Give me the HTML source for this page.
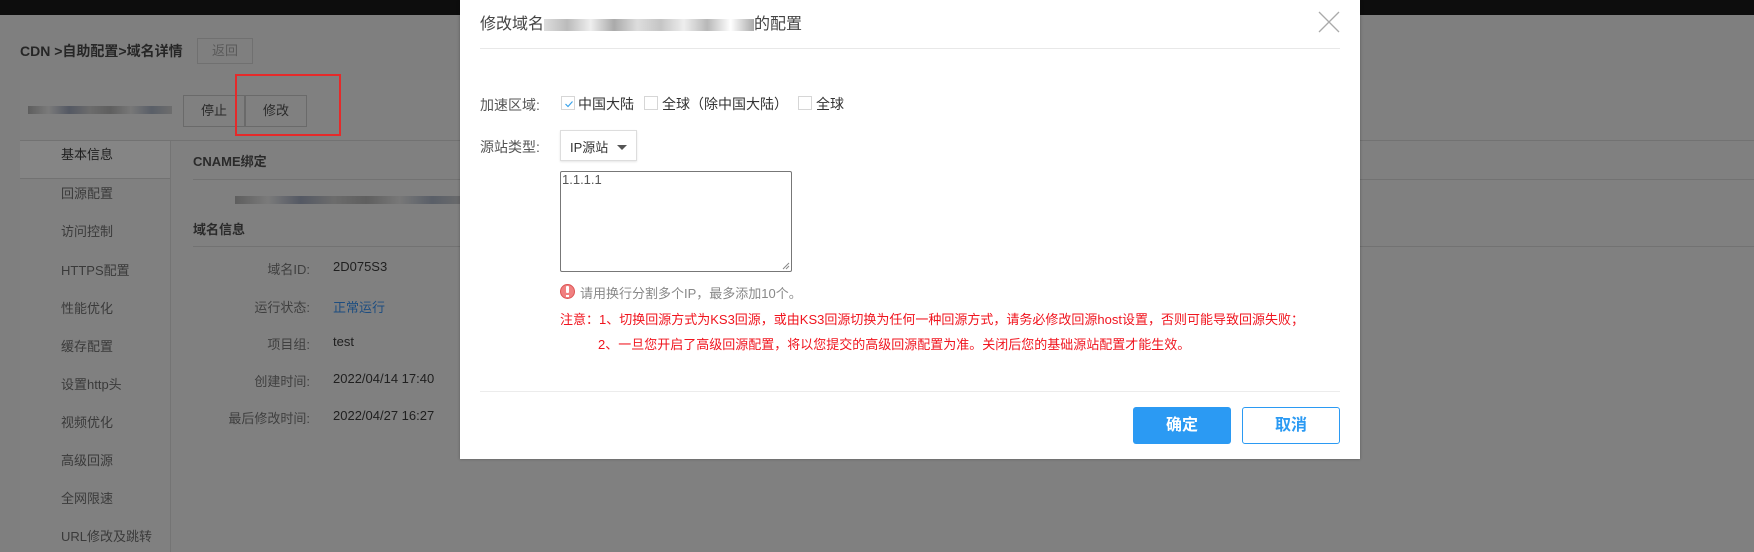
<!DOCTYPE html>
<html><head><meta charset="utf-8"><style>
*{margin:0;padding:0;box-sizing:border-box}
body{width:1754px;height:552px;overflow:hidden;background:#7f7f7f;font-family:"Liberation Sans","Noto Sans CJK SC",sans-serif;position:relative;color:#2a2a2a}
.a{position:absolute;white-space:nowrap}
.top{left:0;top:0;width:1754px;height:15px;background:#0d0d0d}
.panel{left:20px;top:80px;width:1734px;height:472px;background:#808080}
.hl{position:absolute;height:1px;background:#727272}
.nav{font-size:13px;color:#3a3a3a;left:61px}
.lab{font-size:13px;color:#3f3f3f;text-align:right;width:140px;left:170px}
.val{font-size:13px;color:#1f1f1f;left:333px}
.btn{border:1px solid #6a6a6a;font-size:13px;color:#2a2a2a;text-align:center}
.blur{background:linear-gradient(90deg,#5a5a5a,#7a7a7a,#4f5460,#6a6a6a,#5b5b5b,#777,#555b65,#6b6b6b);height:8px;opacity:.9}
.modal{left:460px;top:0;width:900px;height:459px;background:#fff;box-shadow:0 0 3px rgba(0,0,0,.3)}
.m{font-size:14px;color:#555}
.cb{position:absolute;width:14px;height:14px;border:1px solid #d6d6d6;background:#fff}
.red{font-size:13px;color:#f0141e}
</style></head><body>
<div class="a top"></div>
<div class="a" style="left:20px;top:41px;font-size:14px;font-weight:bold;color:#262626">CDN &gt;自助配置&gt;域名详情</div>
<div class="a btn" style="left:197px;top:38px;width:56px;height:26px;line-height:24px;color:#5a5a5a;border-color:#707070">返回</div>
<div class="a panel"></div>
<div class="a blur" style="left:28px;top:106px;width:144px"></div>
<div class="a btn" style="left:183px;top:95px;width:62px;height:32px;line-height:30px">停止</div>
<div class="a btn" style="left:245px;top:95px;width:62px;height:32px;line-height:30px">修改</div>
<div class="a" style="left:235px;top:74px;width:106px;height:62px;border:2px solid #e52a2a"></div>
<div class="hl" style="left:20px;top:140px;width:1734px"></div>
<div class="a" style="left:20px;top:141px;width:150px;height:38px;background:#858585"></div>
<div class="a" style="left:170px;top:141px;width:1px;height:411px;background:#747474"></div>
<div class="hl" style="left:20px;top:178px;width:150px"></div>
<div class="hl" style="left:193px;top:179px;width:1561px"></div>
<div class="hl" style="left:193px;top:246px;width:1561px"></div>
<div class="a nav" style="top:144px;color:#1f1f1f">基本信息</div>
<div class="a nav" style="top:183px">回源配置</div>
<div class="a nav" style="top:221px">访问控制</div>
<div class="a nav" style="top:260px">HTTPS配置</div>
<div class="a nav" style="top:298px">性能优化</div>
<div class="a nav" style="top:336px">缓存配置</div>
<div class="a nav" style="top:374px">设置http头</div>
<div class="a nav" style="top:412px">视频优化</div>
<div class="a nav" style="top:450px">高级回源</div>
<div class="a nav" style="top:488px">全网限速</div>
<div class="a nav" style="top:526px">URL修改及跳转</div>
<div class="a" style="left:193px;top:151px;font-size:13px;font-weight:bold;color:#2a2a2a">CNAME绑定</div>
<div class="a blur" style="left:235px;top:196px;width:230px"></div>
<div class="a" style="left:193px;top:219px;font-size:13px;font-weight:bold;color:#2a2a2a">域名信息</div>
<div class="a lab" style="top:259px">域名ID:</div><div class="a val" style="top:259px">2D075S3</div>
<div class="a lab" style="top:297px">运行状态:</div><div class="a val" style="top:297px;color:#1d4d80">正常运行</div>
<div class="a lab" style="top:334px">项目组:</div><div class="a val" style="top:334px">test</div>
<div class="a lab" style="top:371px">创建时间:</div><div class="a val" style="top:371px">2022/04/14 17:40</div>
<div class="a lab" style="top:408px">最后修改时间:</div><div class="a val" style="top:408px">2022/04/27 16:27</div>

<div class="a modal"></div>
<div class="a" style="left:480px;top:10px;font-size:16px;color:#444">修改域名<span style="display:inline-block;width:210px;height:12px;background:linear-gradient(90deg,#ddd,#bbb,#eee,#aaa,#ddd,#c5c5c5,#eee,#b8b8b8,#fff,#aaa);vertical-align:middle"></span>的配置</div>
<svg class="a" style="left:1318px;top:11px" width="22" height="22"><path d="M1 1L21 21M21 1L1 21" stroke="#aaa" stroke-width="1.3"/></svg>
<div class="a" style="left:480px;top:48px;width:860px;height:1px;background:#e8e8e8"></div>
<div class="a m" style="left:480px;top:95px">加速区域:</div>
<div class="cb" style="left:561px;top:96px"><svg width="12" height="12" style="position:absolute;left:1px;top:1px"><path d="M2.5 6L5 8.5L9.5 3.5" stroke="#3ba3ea" stroke-width="1.2" fill="none"/></svg></div>
<div class="a m" style="left:578px;top:94px;color:#333">中国大陆</div>
<div class="cb" style="left:644px;top:96px"></div>
<div class="a m" style="left:662px;top:94px;color:#333">全球（除中国大陆）</div>
<div class="cb" style="left:798px;top:96px"></div>
<div class="a m" style="left:816px;top:94px;color:#333">全球</div>
<div class="a m" style="left:480px;top:137px">源站类型:</div>
<div class="a" style="left:560px;top:130px;width:77px;height:31px;border:1px solid #ddd;box-shadow:0 1px 2px rgba(0,0,0,.1)"></div>
<div class="a" style="left:570px;top:137px;font-size:13px;color:#333">IP源站</div>
<div class="a" style="left:617px;top:145px;width:0;height:0;border-left:5px solid transparent;border-right:5px solid transparent;border-top:5px solid #555"></div>
<div class="a" style="left:560px;top:171px;width:232px;height:101px;border:1px solid #777;border-radius:2px"></div>
<div class="a" style="left:562px;top:172px;font-size:13px;color:#555">1.1.1.1</div>
<svg class="a" style="left:782px;top:262px" width="8" height="8"><path d="M1 7L7 1M4 7L7 4" stroke="#888"/></svg>
<div class="a" style="left:560px;top:284px;width:15px;height:15px;border-radius:50%;background:#f08080;border:1px solid #d55"></div>
<div class="a" style="left:566px;top:286px;width:3px;height:7px;background:#fff;border-radius:1px"></div>
<div class="a" style="left:566px;top:295px;width:3px;height:2px;background:#fff"></div>
<div class="a" style="left:580px;top:283px;font-size:13px;color:#888">请用换行分割多个IP，最多添加10个。</div>
<div class="a red" style="left:560px;top:309px">注意：1、切换回源方式为KS3回源，或由KS3回源切换为任何一种回源方式，请务必修改回源host设置，否则可能导致回源失败；</div>
<div class="a red" style="left:598px;top:334px">2、一旦您开启了高级回源配置，将以您提交的高级回源配置为准。关闭后您的基础源站配置才能生效。</div>
<div class="a" style="left:480px;top:391px;width:860px;height:1px;background:#ececec"></div>
<div class="a" style="left:1133px;top:407px;width:98px;height:37px;background:#2b9af3;border-radius:3px;color:#fff;font-size:16px;font-weight:bold;text-align:center;line-height:37px">确定</div>
<div class="a" style="left:1242px;top:407px;width:98px;height:37px;border:1px solid #2b9af3;border-radius:3px;color:#2b9af3;font-size:16px;font-weight:bold;text-align:center;line-height:35px">取消</div>
</body></html>
